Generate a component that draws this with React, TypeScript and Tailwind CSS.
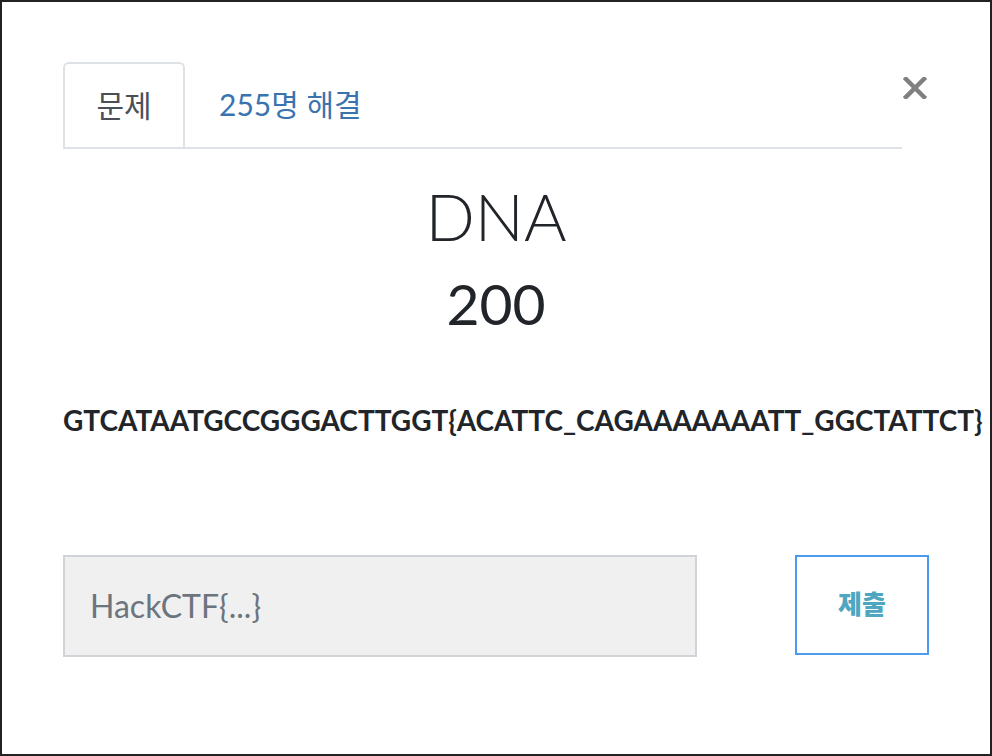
import React, { useState } from 'react';

const CloseIcon: React.FC = () => (
  <svg width="24" height="22" viewBox="0 0 24 22" fill="none">
    <path d="M3 2 L21 20 M21 2 L3 20" stroke="#808080" strokeWidth="4.5" strokeLinecap="square" />
  </svg>
);

export default function App() {
  const [tab, setTab] = useState<'problem' | 'solved'>('problem');
  const [flag, setFlag] = useState('');

  return (
    <div className="w-[992px] h-[756px] border-2 border-[#222] bg-white overflow-hidden font-['Lato','Noto_Sans_CJK_KR',sans-serif]">
      <div className="px-[61px] pt-[60px]">
        <div className="flex items-start justify-between">
          <ul className="flex w-[839px] border-b-2 border-[#dee2e6]">
            <li
              onClick={() => setTab('problem')}
              className={`w-[122px] h-[85px] -mb-[2px] flex items-center justify-center rounded-t-[6px] text-[30px] cursor-pointer ${
                tab === 'problem'
                  ? 'border-2 border-b-0 border-[#dee2e6] bg-white text-[#495057]'
                  : 'text-[#3a74b0]'
              }`}
            >
              문제
            </li>
            <li
              onClick={() => setTab('solved')}
              className="pl-[34px] h-[85px] flex items-center text-[30px] text-[#3a74b0] cursor-pointer"
            >
              255명 해결
            </li>
          </ul>
          <button className="mt-[15px] mr-[2px]">
            <CloseIcon />
          </button>
        </div>

        <div className="mt-[28px] text-center text-[#212529]">
          <h1 className="text-[65px] font-light leading-[1.2]">DNA</h1>
          <p className="mt-[14px] text-[57px] leading-[1.2]">200</p>
        </div>

        <p className="mt-[67px] whitespace-nowrap text-[28px] font-bold leading-[1.2] text-[#212529]">
          GTCATAATGCCGGGACTTGGT{'{'}ACATTC_CAGAAAAAAATT_GGCTATTCT{'}'}
        </p>

        <form
          onSubmit={(e) => e.preventDefault()}
          className="mt-[117px] flex items-start"
        >
          <input
            value={flag}
            onChange={(e) => setFlag(e.target.value)}
            placeholder="HackCTF{...}"
            className="w-[634px] h-[102px] border-2 border-[#d0d4d8] bg-[#f0f0f0] pl-[25px] text-[32px] text-[#495057] placeholder:text-[#6c757d] outline-none"
          />
          <button
            type="submit"
            className="ml-auto w-[134px] h-[100px] border-2 border-[#4a9cf0] bg-white text-[26px] font-black text-[#4fa6bf]"
          >
            제출
          </button>
        </form>
      </div>
    </div>
  );
}
